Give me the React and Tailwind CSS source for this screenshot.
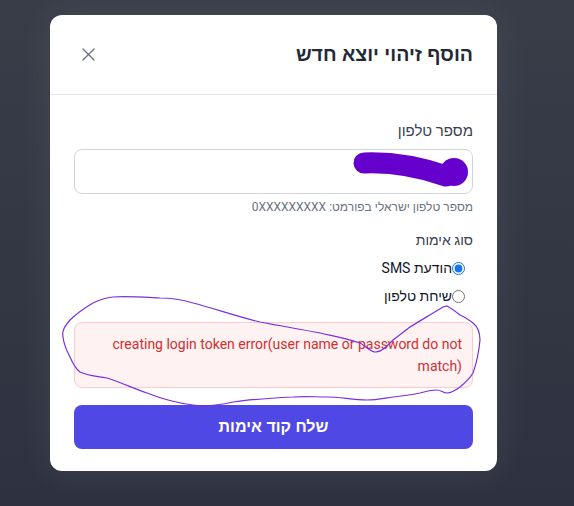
import React, { useState } from 'react';

const App = () => {
  const [method, setMethod] = useState('sms');

  return (
    <div className="relative w-[574px] h-[506px] overflow-hidden bg-gradient-to-b from-[#393d48] to-[#2e3240] font-['Roboto','Liberation_Sans',sans-serif]">
      {/* Modal */}
      <div
        dir="rtl"
        className="ml-[50px] pt-[15px] w-[447px]"
      >
        <div className="bg-white rounded-xl shadow-[0_0_40px_rgba(255,255,255,0.08)]">
          {/* Header */}
          <div className="flex items-center justify-between h-[80px] px-6 border-b border-gray-200">
            <h1 className="text-[19.5px] font-bold text-[#1f2937] font-['Liberation_Sans',sans-serif]">הוסף זיהוי יוצא חדש</h1>
            <button type="button" className="p-2 text-gray-500">
              <svg width="13" height="13" viewBox="0 0 14 14" fill="none" stroke="currentColor" strokeWidth="1.4" strokeLinecap="round">
                <path d="M1 1 L13 13 M13 1 L1 13" />
              </svg>
            </button>
          </div>

          {/* Body */}
          <div className="px-6 pt-[24px] pb-[22px]">
            <label className="block text-[15px] leading-6 text-[#374151] mb-1.5">מספר טלפון</label>
            <input
              type="text"
              className="block w-full h-[45px] rounded-lg border border-gray-300 px-3 focus:outline-none"
            />
            <p className="mt-[5px] text-[12px] leading-4 text-gray-500">מספר טלפון ישראלי בפורמט: 0XXXXXXXXX</p>

            <div className="mt-[15px] text-[14px] leading-5 text-[#374151]">סוג אימות</div>
            <div className="mt-[4px] pr-[8px] text-[14px] text-[#111827]">
              <label className="flex items-center h-[28px]">
                <input
                  type="radio"
                  name="method"
                  checked={method === 'sms'}
                  onChange={() => setMethod('sms')}
                  className="w-[13px] h-[13px] accent-[#1a73e8]"
                />
                <span>הודעת SMS</span>
              </label>
              <label className="flex items-center h-[28px]">
                <input
                  type="radio"
                  name="method"
                  checked={method === 'call'}
                  onChange={() => setMethod('call')}
                  className="w-[13px] h-[13px] accent-[#1a73e8]"
                />
                <span>שיחת טלפון</span>
              </label>
            </div>

            <div className="mt-[12px] rounded-lg border border-red-200 bg-red-50 px-[10px] py-[10px] text-[14px] leading-[22px] text-[#d12f2f]">
              creating login token error(user name or password do not match)
            </div>

            <button
              type="button"
              className="mt-[17px] w-full h-[44px] rounded-lg bg-[#5048e5] text-white text-[16px] font-bold font-['Liberation_Sans',sans-serif]"
            >
              שלח קוד אימות
            </button>
          </div>
        </div>
      </div>

      {/* Redaction / annotation marks drawn over the screenshot */}
      <svg className="absolute inset-0 pointer-events-none" width="574" height="506" viewBox="0 0 574 506">
        <path d="M364 163 C390 162 420 167 446 176" stroke="#6600cc" strokeWidth="21" strokeLinecap="round" fill="none" />
        <circle cx="454" cy="172" r="14" fill="#6600cc" />
        <path
          d="M443 307 C430 315 418 322 410 327 C402 333 397 337 393 340 C387 346 383 351 376 352 C370 352 366 346 360 343 C345 338 333 336 320 333 C300 329 280 326 260 322 C235 316 213 308 193 303 C180 299 172 298 160 298 C140 297 125 296 113 297 C103 298 99 300 93 303 C83 309 76 314 70 320 C64 327 62 331 63 337 C64 346 67 351 70 357 C73 364 76 369 80 372 C88 376 97 376 107 378 C122 383 133 388 147 393 C162 399 178 403 193 405 C206 407 220 405 233 402 C253 399 273 398 293 397 C305 396 315 397 327 397 C340 397 353 400 367 400 C377 400 385 398 393 397 C402 396 411 395 420 393 C427 391 432 390 437 390 C441 390 443 393 447 393 C452 393 456 390 460 387 C466 382 470 378 473 373 C477 362 479 350 480 340 C480 332 478 327 473 323 C469 320 465 317 460 315 C455 311 451 308 447 306 Z"
          stroke="#7a2fe0"
          strokeWidth="1.2"
          fill="none"
        />
      </svg>
    </div>
  );
};

export default App;
